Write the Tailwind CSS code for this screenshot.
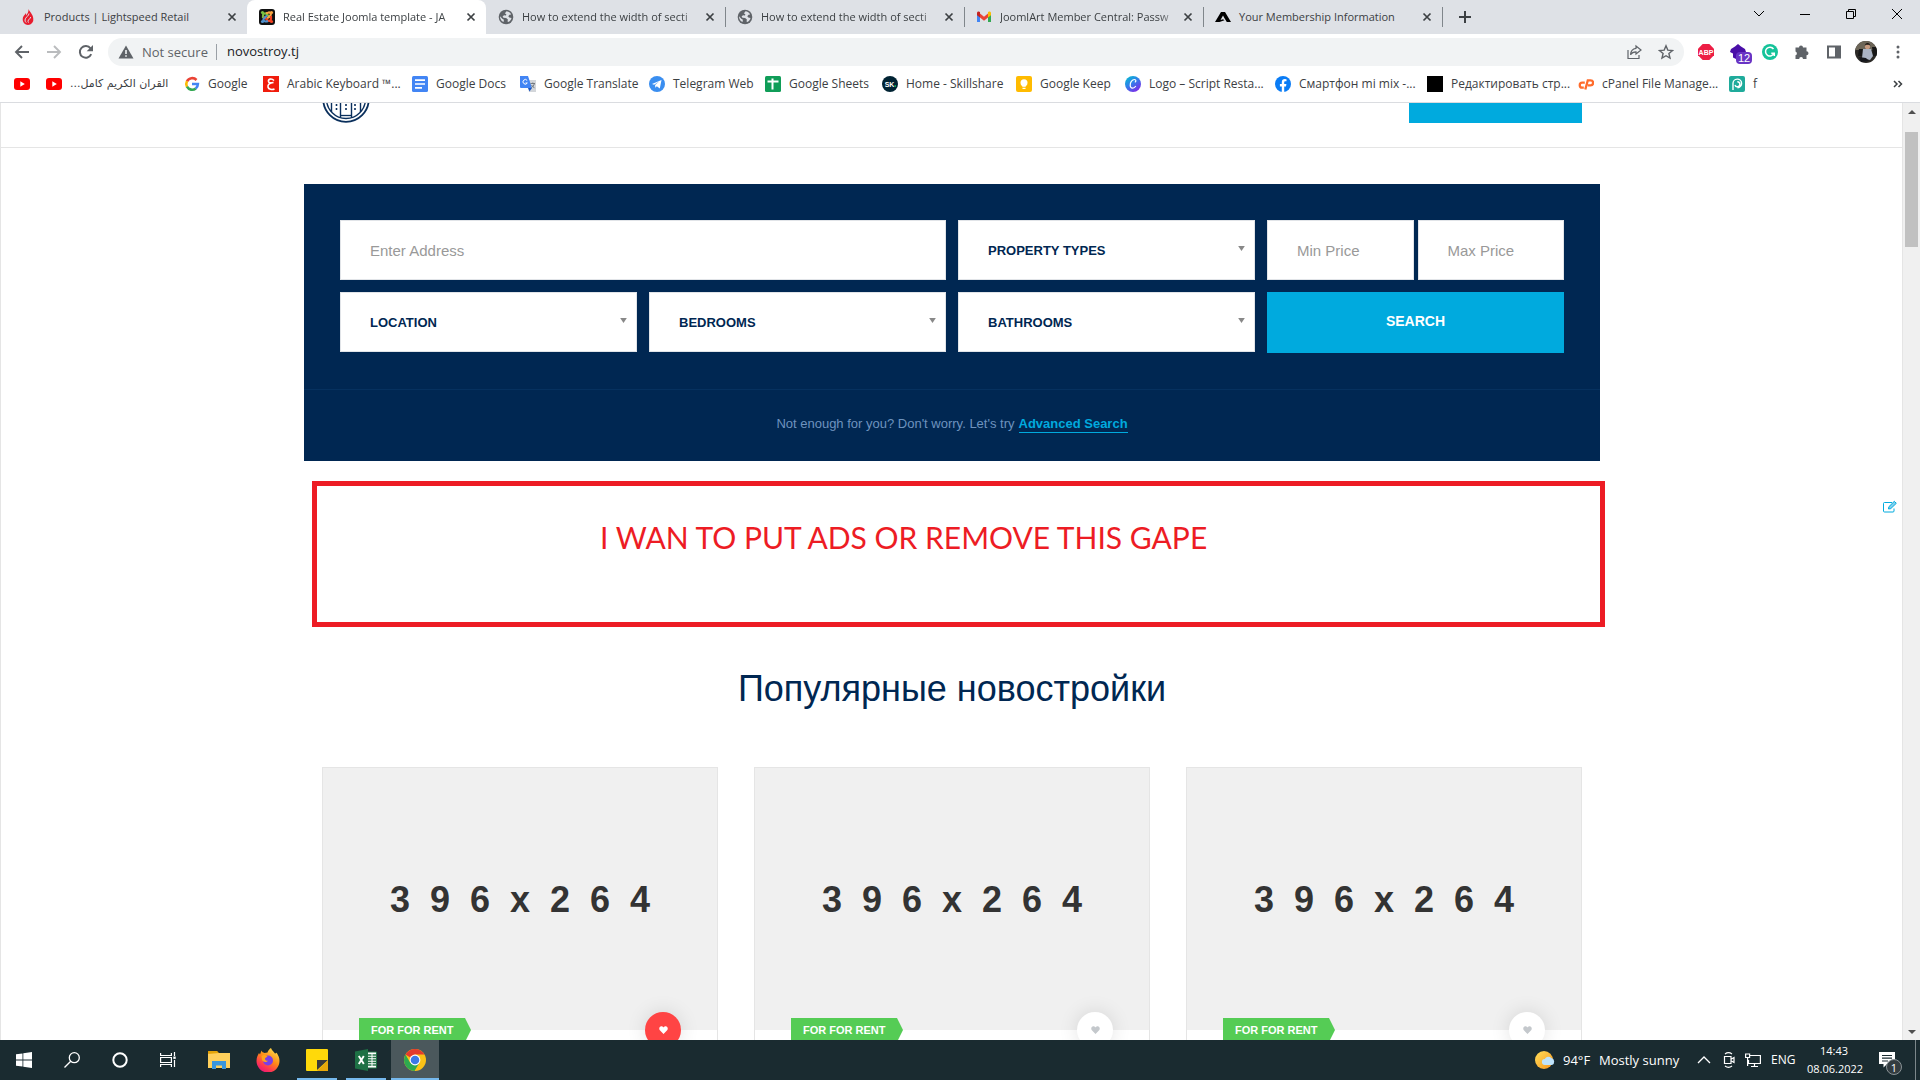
<!DOCTYPE html>
<html lang="en">
<head>
    <meta charset="UTF-8">
    <meta name="viewport" content="width=device-width, initial-scale=1.0">
    <title>Real Estate Joomla template - JA</title>
    <script src="https://cdn.jsdelivr.net/npm/@tailwindcss/browser@4"></script>
</head>
<body class="h-screen flex flex-col overflow-hidden bg-white font-['Open_Sans','Noto_Sans',sans-serif] text-xs text-[#3c4043]">

    <!-- Shared icons -->
    <svg class="hidden">
        <symbol id="i-close" viewBox="0 0 16 16"><path d="M4.5 4.5l7 7M11.5 4.5l-7 7" stroke="#3c4043" stroke-width="1.7" fill="none"/></symbol>
        <symbol id="i-globe" viewBox="0 0 16 16">
            <circle cx="8" cy="8" r="7.3" fill="#5f6368"/>
            <path d="M8.5 2.2c2 .2 3.900 1.500 4.700 3.300l-1.700.3-1.200 1.500 1 1.200 2.200.4c-.3 1.700-1.400 3.200-3 4l-1-.5.4-2-1.800-1.300-2.700-.3-.8-1.600 1.600-.9 1.800.3.300-1.500L6.800 4.500z" fill="#dee1e6"/>
            <path d="M2 7.200l2.300 2.600 1.600 1-.3 2.300C3.500 12.200 2 10 2 7.200z" fill="#dee1e6"/>
        </symbol>
        <symbol id="i-youtube" viewBox="0 0 16 16"><rect y="2" width="16" height="12" rx="3" fill="#f00"/><path d="M6.300 5.300L10.800 8l-4.500 2.700z" fill="#fff"/></symbol>
        <symbol id="i-heart" viewBox="0 0 10 9"><path d="M5 9L.9 4.800C-.5 3 .3.300 2.600.300 3.800.300 4.600 1 5 1.700 5.400 1 6.200.300 7.400.300c2.300 0 3.100 2.700 1.700 4.500z" fill="currentColor"/></symbol>
        <symbol id="i-arrow" viewBox="0 0 8 6"><path d="M0 0h8L4 6z" fill="currentColor"/></symbol>
    </svg>

    <!-- Tab strip -->
    <div class="flex h-[34px] shrink-0 bg-[#dee1e6] pl-2 text-[11px]">
        <div class="flex w-[239px] items-center gap-2 pl-3 pr-[7px]">
            <svg class="size-4 shrink-0" viewBox="0 0 16 16"><path d="M8.500 0c.8 2.500 4.800 5.700 4.800 9.700A5.400 5.400 0 0 1 8 16a5.400 5.400 0 0 1-5.300-6c0-2.600 2-4 3.300-6 .2 1 .1 1.800-.1 2.600C7.400 5 8.800 2.600 8.500 0z" fill="#e81c2e"/><path d="M9 4.500c.3 2-4 4-4 6.500 0 1.200.5 2 1.200 2.600M10.600 8c.2 1.700-2.600 2.400-2.600 4.200 0 .6.200 1 .5 1.400" stroke="#dee1e6" fill="none"/></svg>
            <span class="flex-1 whitespace-nowrap">Products | Lightspeed Retail</span>
            <button class="-ml-2" aria-label="Close tab"><svg class="size-4"><use href="#i-close"/></svg></button>
        </div>
        <div class="flex w-[239px] items-center gap-2 rounded-t-lg bg-white pl-3 pr-[7px]">
            <svg class="size-4 shrink-0" viewBox="0 0 16 16"><rect width="16" height="16" rx="3" fill="#111"/><g fill="none" stroke-width="2.200"><path d="M4 9V6.500C4 4 7 4 8 5.500l3 3" stroke="#7ac143"/><path d="M7 4.200l2-.5c2-.8 3.500 1 2.500 2.800L8 9.500" stroke="#f9a541"/><path d="M12 7v3c0 2-2.500 2.500-3.800 1L5 7.500" stroke="#f44321"/><path d="M9 12c-2 1-5 .5-4.500-2L8 6.500" stroke="#5091cd"/></g><circle cx="3.500" cy="3.500" r="1.600" fill="#7ac143"/><circle cx="12.500" cy="3.500" r="1.600" fill="#f9a541"/><circle cx="12.500" cy="12.500" r="1.600" fill="#f44321"/><circle cx="3.500" cy="12.500" r="1.600" fill="#5091cd"/></svg>
            <span class="flex-1 whitespace-nowrap [mask-image:linear-gradient(to_right,#000_88%,transparent)]">Real Estate Joomla template - JA</span>
            <button class="-ml-2" aria-label="Close tab"><svg class="size-4"><use href="#i-close"/></svg></button>
        </div>
        <div class="flex w-[239px] items-center gap-2 pl-3 pr-[7px]">
            <svg class="size-4 shrink-0"><use href="#i-globe"/></svg>
            <span class="flex-1 whitespace-nowrap [mask-image:linear-gradient(to_right,#000_88%,transparent)]">How to extend the width of secti</span>
            <button class="-ml-2" aria-label="Close tab"><svg class="size-4"><use href="#i-close"/></svg></button>
        </div>
        <div class="mt-[7px] h-5 w-px -mr-px bg-[#80868b]"></div>
        <div class="flex w-[239px] items-center gap-2 pl-3 pr-[7px]">
            <svg class="size-4 shrink-0"><use href="#i-globe"/></svg>
            <span class="flex-1 whitespace-nowrap [mask-image:linear-gradient(to_right,#000_88%,transparent)]">How to extend the width of secti</span>
            <button class="-ml-2" aria-label="Close tab"><svg class="size-4"><use href="#i-close"/></svg></button>
        </div>
        <div class="mt-[7px] h-5 w-px -mr-px bg-[#80868b]"></div>
        <div class="flex w-[239px] items-center gap-2 pl-3 pr-[7px]">
            <svg class="size-4 shrink-0" viewBox="0 0 16 16"><path d="M1 4v9h3V6z" fill="#4285f4"/><path d="M15 4v9h-3V6z" fill="#34a853"/><path d="M4 4.500L8 7.700l4-3.200v4L8 11.700 4 8.500z" fill="#ea4335"/><path d="M1 4c0-1.600 1.800-2 3-1v5.500L1 6.300z" fill="#c5221f"/><path d="M15 4c0-1.600-1.800-2-3-1v5.500l3-2.200z" fill="#fbbc04"/></svg>
            <span class="flex-1 whitespace-nowrap [mask-image:linear-gradient(to_right,#000_88%,transparent)]">JoomlArt Member Central: Passw</span>
            <button class="-ml-2" aria-label="Close tab"><svg class="size-4"><use href="#i-close"/></svg></button>
        </div>
        <div class="mt-[7px] h-5 w-px -mr-px bg-[#80868b]"></div>
        <div class="flex w-[239px] items-center gap-2 pl-3 pr-[7px]">
            <svg class="size-4 shrink-0" viewBox="0 0 16 16"><path d="M0 13L6 3h4l6 10h-4.200L9.500 9.300 8 6.500 5.500 11l2.500-.8 1.500 1L4.500 13z" fill="#000"/></svg>
            <span class="flex-1 whitespace-nowrap">Your Membership Information</span>
            <button class="-ml-2" aria-label="Close tab"><svg class="size-4"><use href="#i-close"/></svg></button>
        </div>
        <div class="mt-[7px] h-5 w-px bg-[#80868b]"></div>
        <button class="ml-3.5" aria-label="New tab"><svg class="size-4" viewBox="0 0 16 16"><path d="M8 2v12M2 8h12" stroke="#3c4043" stroke-width="2"/></svg></button>
        <div class="ml-auto flex h-7 text-black">
            <button class="flex w-[46px] items-center justify-center" aria-label="Search tabs"><svg class="size-3" viewBox="0 0 12 12"><path d="M1 3l5 5 5-5" stroke="currentColor" fill="none"/></svg></button>
            <button class="flex w-[46px] items-center justify-center" aria-label="Minimize"><svg class="size-3" viewBox="0 0 12 12"><path d="M1 6.500h10" stroke="currentColor"/></svg></button>
            <button class="flex w-[46px] items-center justify-center" aria-label="Restore"><svg class="size-3" viewBox="0 0 12 12"><path d="M1.500 3.500h7v7h-7zM3.500 3V1.500h7v7H9" stroke="currentColor" fill="none"/></svg></button>
            <button class="flex w-[46px] items-center justify-center" aria-label="Close"><svg class="size-3" viewBox="0 0 12 12"><path d="M1 1l10 10M11 1L1 11" stroke="currentColor"/></svg></button>
        </div>
    </div>

    <!-- Toolbar -->
    <div class="flex h-9 shrink-0 items-center px-1.5 text-[#5f6368]">
        <button class="flex w-8 justify-center" aria-label="Back"><svg class="size-4" viewBox="0 0 16 16"><path d="M15 8H2.500M8 2L2 8l6 6" stroke="currentColor" stroke-width="1.900" fill="none"/></svg></button>
        <button class="flex w-8 justify-center text-[#babcbe]" aria-label="Forward"><svg class="size-4" viewBox="0 0 16 16"><path d="M1 8h12.500M8 2l6 6-6 6" stroke="currentColor" stroke-width="1.900" fill="none"/></svg></button>
        <button class="flex w-8 justify-center" aria-label="Reload"><svg class="size-4" viewBox="0 0 16 16"><path d="M13.200 10.200A5.900 5.900 0 1 1 12.500 4.300" stroke="currentColor" stroke-width="2" fill="none"/><path d="M15 1v6.300H8.700z" fill="currentColor"/></svg></button>
        <div class="mx-1.5 flex h-7 flex-1 items-center rounded-full bg-[#f1f3f4] pl-2.5 pr-0.5 text-[13px]">
            <svg class="size-4" viewBox="0 0 16 16"><path d="M8 1.500L15.500 14.500H.5z" fill="#5f6368"/><path d="M7.200 6h1.600v4H7.200zM7.200 11.200h1.600v1.600H7.200z" fill="#f1f3f4"/></svg>
            <span class="ml-2 w-[75px] border-r border-[#9aa0a6] leading-4">Not secure</span>
            <input class="ml-2.5 min-w-0 flex-1 bg-transparent text-[#202124] outline-none" type="text" value="novostroy.tj" aria-label="Address">
            <button class="flex w-8 justify-center" aria-label="Share"><svg class="size-4" viewBox="0 0 16 16"><path d="M2 6v8.500h11V11M10 2l5 4-5 4V7.800c-2.500 0-4.200.7-5.500 3 .2-3.500 2-6 5.500-6.500z" stroke="currentColor" stroke-width="1.200" fill="none"/></svg></button>
            <button class="flex w-8 justify-center" aria-label="Bookmark"><svg class="size-4" viewBox="0 0 16 16"><path d="M8 1.800l1.800 4.300 4.700.4-3.600 3 1.100 4.600L8 11.700l-4 2.400 1.100-4.600-3.600-3 4.700-.4z" stroke="currentColor" stroke-width="1.400" fill="none"/></svg></button>
        </div>
        <button class="flex w-8 justify-center" aria-label="Adblock Plus">
            <svg class="size-4" viewBox="0 0 16 16"><path d="M4.700 0h6.600L16 4.700v6.600L11.300 16H4.700L0 11.300V4.700z" fill="#ed1e45"/><text x="8" y="10.500" text-anchor="middle" font-family="Liberation Sans" font-weight="700" font-size="7" fill="#fff">ABP</text></svg>
        </button>
        <button class="relative flex w-8 justify-center" aria-label="Extension">
            <svg class="size-4" viewBox="0 0 16 16"><path d="M8 0l3 2.500L15 5l1 3-3 1.500v4L8 16l-5-2.500v-4L0 8l1-3 4-2.500z" fill="#4a0fa8"/></svg>
            <span class="absolute left-3.5 top-2 rounded-sm bg-[#6833c4] px-0.5 font-['Liberation_Sans'] text-[11px] leading-3 text-white">12</span>
        </button>
        <button class="flex w-8 justify-center" aria-label="Grammarly"><svg class="size-4" viewBox="0 0 16 16"><circle cx="8" cy="8" r="8" fill="#15c39a"/><path d="M11.500 5A4.400 4.400 0 1 0 12 9.300H9.300M12.300 12V9" stroke="#fff" stroke-width="1.500" fill="none"/></svg></button>
        <button class="flex w-8 justify-center" aria-label="Extensions"><svg class="size-4" viewBox="0 0 16 16"><path d="M5 3.500a2 2 0 0 1 4 0h3.500v3.700a2 2 0 0 1 0 4V15H9a1.900 1.900 0 0 0-3.800 0H1.500v-3.700a2 2 0 0 0 0-3.800v-4z" fill="currentColor"/></svg></button>
        <button class="flex w-8 justify-center" aria-label="Side panel"><svg class="size-4" viewBox="0 0 16 16"><path d="M1 1.500h14v13H1zM3 3.500v9h6v-9z" fill="currentColor" fill-rule="evenodd"/></svg></button>
        <button class="flex w-8 justify-center" aria-label="Profile">
            <svg class="size-[22px]" viewBox="0 0 22 22"><clipPath id="avatar"><circle cx="11" cy="11" r="11"/></clipPath><g clip-path="url(#avatar)"><path d="M0 0h22v22H0z" fill="#2b2926"/><path d="M0 0h22v9H0z" fill="#6d6658"/><path d="M4 8h4v7H3zM17 6h5v9h-4z" fill="#171717"/><path d="M8 8h8l2 7-3 4-8-2z" fill="#aab3c4"/><circle cx="12.500" cy="5.500" r="2.600" fill="#c79b80"/><path d="M9.800 5c0-4 5.500-4 5.500 0l-1-1.200h-3.500z" fill="#1a1412"/><path d="M4 16l7 1 3 3-8 1z" fill="#15171c"/></g></svg>
        </button>
        <button class="flex w-8 justify-center" aria-label="Menu"><svg class="size-4" viewBox="0 0 16 16" fill="currentColor"><circle cx="8" cy="3" r="1.500"/><circle cx="8" cy="8" r="1.500"/><circle cx="8" cy="13" r="1.500"/></svg></button>
    </div>

    <!-- Bookmarks bar -->
    <nav class="flex h-[33px] shrink-0 items-center justify-between border-b border-[#dadce0] px-3.5 pb-1 whitespace-nowrap">
        <div class="grid grid-cols-[16px_122px_63px_133px_92px_113px_100px_101px_118px_93px_134px_136px_135px_135px_30px] gap-x-4">
            <a href="#" class="flex items-center" aria-label="YouTube"><svg class="size-4"><use href="#i-youtube"/></svg></a>
            <a href="#" class="flex items-center gap-2"><svg class="size-4 shrink-0"><use href="#i-youtube"/></svg><span dir="rtl" class="font-['DejaVu_Sans'] text-[11px] leading-4">القران الكريم كامل...</span></a>
            <a href="#" class="flex items-center gap-2"><svg class="size-4 shrink-0" viewBox="0 0 16 16" fill="none" stroke-width="2.600"><path d="M12.500 4A5.900 5.900 0 0 0 3 5.300" stroke="#ea4335"/><path d="M3 5.200a5.900 5.900 0 0 0 0 5.600" stroke="#fbbc05"/><path d="M3 10.700a5.900 5.900 0 0 0 8.800 1.800" stroke="#34a853"/><path d="M11.700 12.500A5.900 5.900 0 0 0 13.900 8H8" stroke="#4285f4"/></svg>Google</a>
            <a href="#" class="flex items-center gap-2"><svg class="size-4 shrink-0" viewBox="0 0 16 16"><path d="M0 0h16v16H0z" fill="#f01c0c"/><path d="M11 4.500C8.500 2 5 3 5.500 5.500c.3 1.300 2 1.700 5 1-3.500.5-6 1.800-5.500 4.500.5 2.500 4 3 6.500 2" stroke="#fff" stroke-width="1.600" fill="none"/></svg>Arabic Keyboard ™...</a>
            <a href="#" class="flex items-center gap-2"><svg class="size-4 shrink-0" viewBox="0 0 16 16"><rect width="16" height="16" rx="1.500" fill="#4285f4"/><path d="M3 4.200h10M3 8h10M3 11.800h7" stroke="#fff" stroke-width="1.700"/></svg>Google Docs</a>
            <a href="#" class="flex items-center gap-2"><svg class="size-4 shrink-0" viewBox="0 0 16 16"><path d="M6 4h10v12H9z" fill="#d3d6da"/><path d="M0 0h8l4 12H1a1 1 0 0 1-1-1z" fill="#4285f4"/><path d="M8 12h4l-2.500 3.500z" fill="#1a56c4"/><path d="M7.200 4.500A2.300 2.300 0 1 0 7.300 7H5.500" stroke="#fff" fill="none"/><path d="M10.500 7.500H15M12.800 6.500v1M14.300 7.700c-.5 2-1.500 3.200-3 4M11.500 9l3 3.200" stroke="#6b7278" stroke-width=".9" fill="none"/></svg>Google Translate</a>
            <a href="#" class="flex items-center gap-2"><svg class="size-4 shrink-0" viewBox="0 0 16 16"><circle cx="8" cy="8" r="8" fill="#3a8ef0"/><path d="M3 8l9.500-4-1.700 8.500-3-2.200-1.500 1.500-.2-2.700 4-3.500-5 3.200z" fill="#fff"/></svg>Telegram Web</a>
            <a href="#" class="flex items-center gap-2"><svg class="size-4 shrink-0" viewBox="0 0 16 16"><rect width="16" height="16" rx="1.500" fill="#109d58"/><path d="M2.500 5.500h11M7.500 2.500v11" stroke="#fff" stroke-width="2"/></svg>Google Sheets</a>
            <a href="#" class="flex items-center gap-2"><svg class="size-4 shrink-0" viewBox="0 0 16 16"><circle cx="8" cy="8" r="8" fill="#002333"/><text x="7.500" y="10.500" text-anchor="middle" font-family="Liberation Sans" font-weight="700" font-size="7" fill="#fff">SK</text><circle cx="13.200" cy="10" r=".8" fill="#00ff84"/></svg>Home - Skillshare</a>
            <a href="#" class="flex items-center gap-2"><svg class="size-4 shrink-0" viewBox="0 0 16 16"><rect width="16" height="16" rx="2" fill="#ffbb00"/><circle cx="8" cy="6.700" r="3.500" fill="#fff"/><path d="M6.200 9h3.600v1.800H6.200zM6.500 11.800h3v1.300h-3z" fill="#fff"/></svg>Google Keep</a>
            <a href="#" class="flex items-center gap-2"><svg class="size-4 shrink-0" viewBox="0 0 16 16"><linearGradient id="canva" x1="0" y1="0" x2=".7" y2="1"><stop stop-color="#00c4cc"/><stop offset=".5" stop-color="#2f80ea"/><stop offset="1" stop-color="#7d2ae8"/></linearGradient><circle cx="8" cy="8" r="8" fill="url(#canva)"/><path d="M9.800 6.200c1.500-.5 1.500-2.700-.3-2.700-2.500 0-4.500 3-4.300 6 .2 3.500 3.800 3.500 5.600.5" stroke="#fff" stroke-width="1.200" fill="none"/></svg>Logo – Script Resta...</a>
            <a href="#" class="flex items-center gap-2"><svg class="size-4 shrink-0" viewBox="0 0 16 16"><circle cx="8" cy="8" r="8" fill="#0a7cf5"/><path d="M6.800 16v-5.500H4.900V8h1.900V6.300c0-2.100 1.200-3.200 3-3.200l1.700.1v2h-1c-1 0-1.300.6-1.300 1.200V8h2.200l-.4 2.500H9.200V16z" fill="#fff"/></svg>Смартфон mi mix -...</a>
            <a href="#" class="flex items-center gap-2"><svg class="size-4 shrink-0" viewBox="0 0 16 16"><path d="M0 0h16v16H0z"/></svg>Редактировать стр...</a>
            <a href="#" class="flex items-center gap-2"><svg class="size-4 shrink-0" viewBox="0 0 16 16" fill="none" stroke="#ff6c2c" stroke-width="2.300"><path d="M6.800 6.700H4.200a2.400 2.400 0 0 0 0 4.900h1.600M7.300 13.500L9.800 4.300h2.800a2.500 2.500 0 0 1 0 5h-2.800"/></svg>cPanel File Manage...</a>
            <a href="#" class="flex items-center gap-2"><svg class="size-4 shrink-0" viewBox="0 0 16 16"><rect width="16" height="16" rx="2" fill="#1fab9b"/><path d="M4 14V7.500a4.300 4.300 0 1 1 4.500 4.200M6 9a2.500 2.500 0 1 0 2.300-3.200" stroke="#fff" stroke-width="1.400" fill="none"/></svg>f</a>
        </div>
        <button class="pr-0.5" aria-label="More bookmarks"><svg class="size-3" viewBox="0 0 12 12"><path d="M2 3l3 3-3 3M6.500 3l3 3-3 3" stroke="#3c4043" stroke-width="1.500" fill="none"/></svg></button>
    </nav>

    <!-- Page -->
    <div class="flex min-h-0 flex-1 font-['Liberation_Sans',Arial,sans-serif]">
        <main class="relative min-w-0 flex-1 overflow-hidden border-l border-[#e5e5e5]">
            <header class="border-b border-[#e5e5e5]">
                <div class="mx-auto flex h-11 max-w-[1260px] items-start justify-between">
                    <a href="#" aria-label="Home">
                        <svg class="h-5 w-12" viewBox="0 28 48 20" fill="none" stroke="#0a2f5c"><circle cx="24" cy="24" r="22.800" stroke-width="1.800"/><circle cx="24" cy="24" r="19.500" stroke-width="1.300"/><path d="M18.500 28v14M29.500 28v14M38.500 28v9M9.500 28v9" stroke-width="1.400"/><path d="M18 40.500h12" stroke-width="1.300"/><path d="M24 29v8M33 29v8M14.500 29v8" stroke-dasharray="2 2" stroke-width="1.600"/></svg>
                    </a>
                    <button class="h-5 w-[173px] bg-[#00aade]" aria-label="Submit property"></button>
                </div>
            </header>

            <div class="mx-auto mt-9 max-w-[1296px]">
                <form class="bg-[#002752]">
                    <div class="grid grid-cols-4 gap-3 px-9 pt-9 pb-9 text-[13px] font-bold text-[#002752]">
                        <input class="col-span-2 h-[60px] border border-[#e1e4e8] bg-white px-[29px] text-[15px] font-normal placeholder:text-[#999]" type="text" placeholder="Enter Address" aria-label="Address">
                        <div class="relative">
                            <select class="h-[60px] w-full appearance-none border border-[#e1e4e8] bg-white px-[29px] pt-0.5 uppercase" aria-label="Property types"><option>Property Types</option></select>
                            <svg class="pointer-events-none absolute right-2.5 top-[26px] h-[5px] w-[7px] text-[#888]"><use href="#i-arrow"/></svg>
                        </div>
                        <div class="grid grid-cols-2 gap-1">
                            <input class="h-[60px] min-w-0 border border-[#e1e4e8] bg-white px-[29px] text-[15px] font-normal placeholder:text-[#999]" type="text" placeholder="Min Price" aria-label="Min price">
                            <input class="h-[60px] min-w-0 border border-[#e1e4e8] bg-white px-[29px] text-[15px] font-normal placeholder:text-[#999]" type="text" placeholder="Max Price" aria-label="Max price">
                        </div>
                        <div class="relative">
                            <select class="h-[60px] w-full appearance-none border border-[#e1e4e8] bg-white px-[29px] pt-0.5 uppercase" aria-label="Location"><option>Location</option></select>
                            <svg class="pointer-events-none absolute right-2.5 top-[26px] h-[5px] w-[7px] text-[#888]"><use href="#i-arrow"/></svg>
                        </div>
                        <div class="relative">
                            <select class="h-[60px] w-full appearance-none border border-[#e1e4e8] bg-white px-[29px] pt-0.5 uppercase" aria-label="Bedrooms"><option>Bedrooms</option></select>
                            <svg class="pointer-events-none absolute right-2.5 top-[26px] h-[5px] w-[7px] text-[#888]"><use href="#i-arrow"/></svg>
                        </div>
                        <div class="relative">
                            <select class="h-[60px] w-full appearance-none border border-[#e1e4e8] bg-white px-[29px] pt-0.5 uppercase" aria-label="Bathrooms"><option>Bathrooms</option></select>
                            <svg class="pointer-events-none absolute right-2.5 top-[26px] h-[5px] w-[7px] text-[#888]"><use href="#i-arrow"/></svg>
                        </div>
                        <button class="h-[61px] bg-[#00aade] pb-1 text-sm text-white" type="button">SEARCH</button>
                    </div>
                    <p class="flex h-[72px] items-baseline justify-center gap-1 border-t border-[#06315f] pt-[26px] text-[13px] leading-4 text-[#6e93bf]">
                        Not enough for you? Don't worry. Let's try <a href="#" class="border-b border-[#00aade] font-bold text-[#00aade]">Advanced Search</a>
                    </p>
                </form>

                <div class="mt-5 ml-2 -mr-[5px] h-[146px] border-5 border-[#ed1c24]">
                    <p class="pt-[33px] pl-[283px] font-['Lato'] text-3xl text-[#ed1c24]">I WAN TO PUT ADS OR REMOVE THIS GAPE</p>
                </div>
            </div>

            <section class="mx-auto max-w-[1260px]">
                <h2 class="mt-[42px] text-center text-4xl text-[#002752]">Популярные новостройки</h2>
                <div class="mt-[58px] grid grid-cols-3 gap-9">
                    <article class="border border-[#e5e5e5]">
                        <div class="relative flex h-[262px] items-center justify-center bg-[#f0f0f0] pt-0.5">
                            <span class="whitespace-pre text-4xl font-bold text-[#333]">3  9  6  x  2  6  4</span>
                            <span class="absolute -bottom-3 left-9 flex h-6 w-28 items-center bg-[#55cc55] pl-3 text-[11px] font-bold text-white [clip-path:polygon(0_0,106px_0,100%_50%,106px_100%,0_100%)]">FOR FOR RENT</span>
                            <button class="absolute -bottom-[18px] right-9 flex size-9 items-center justify-center rounded-full bg-[#ff4444] text-white shadow-[0_0_20px_rgba(0,0,0,0.12)]" aria-label="Favorite"><svg class="h-2 w-[9px]"><use href="#i-heart"/></svg></button>
                        </div>
                        <div class="h-40"></div>
                    </article>
                    <article class="border border-[#e5e5e5]">
                        <div class="relative flex h-[262px] items-center justify-center bg-[#f0f0f0] pt-0.5">
                            <span class="whitespace-pre text-4xl font-bold text-[#333]">3  9  6  x  2  6  4</span>
                            <span class="absolute -bottom-3 left-9 flex h-6 w-28 items-center bg-[#55cc55] pl-3 text-[11px] font-bold text-white [clip-path:polygon(0_0,106px_0,100%_50%,106px_100%,0_100%)]">FOR FOR RENT</span>
                            <button class="absolute -bottom-[18px] right-9 flex size-9 items-center justify-center rounded-full bg-white text-[#c4c8cc] shadow-[0_0_20px_rgba(0,0,0,0.12)]" aria-label="Favorite"><svg class="h-2 w-[9px]"><use href="#i-heart"/></svg></button>
                        </div>
                        <div class="h-40"></div>
                    </article>
                    <article class="border border-[#e5e5e5]">
                        <div class="relative flex h-[262px] items-center justify-center bg-[#f0f0f0] pt-0.5">
                            <span class="whitespace-pre text-4xl font-bold text-[#333]">3  9  6  x  2  6  4</span>
                            <span class="absolute -bottom-3 left-9 flex h-6 w-28 items-center bg-[#55cc55] pl-3 text-[11px] font-bold text-white [clip-path:polygon(0_0,106px_0,100%_50%,106px_100%,0_100%)]">FOR FOR RENT</span>
                            <button class="absolute -bottom-[18px] right-9 flex size-9 items-center justify-center rounded-full bg-white text-[#c4c8cc] shadow-[0_0_20px_rgba(0,0,0,0.12)]" aria-label="Favorite"><svg class="h-2 w-[9px]"><use href="#i-heart"/></svg></button>
                        </div>
                        <div class="h-40"></div>
                    </article>
                </div>
            </section>

            <a href="#" class="absolute right-1.5 top-[397px]" aria-label="Edit"><svg class="h-3.5 w-3.5" viewBox="0 0 14 14" fill="none" stroke="#00aade"><path d="M11 8.500v2.500a1 1 0 0 1-1 1H1.500a1 1 0 0 1-1-1v-7.500a1 1 0 0 1 1-1H9"/><path d="M5.500 9l.4-2.300L11.300 1.300l2 2L7.800 8.600z" fill="#7fd0ee"/></svg></a>
        </main>

        <!-- Scrollbar -->
        <aside class="z-10 flex w-[17px] shrink-0 flex-col items-center bg-[#f0f0f0] pt-[7px] pb-[6px] text-[#505050] shadow-[-1px_0_0_#e5e5e5]">
            <svg class="h-1 w-2 rotate-180" viewBox="0 0 8 4"><path d="M0 0h8L4 4z" fill="currentColor"/></svg>
            <div class="mt-[18px] h-[115px] w-[13px] bg-[#c1c1c1]"></div>
            <svg class="mt-auto h-1 w-2" viewBox="0 0 8 4"><path d="M0 0h8L4 4z" fill="currentColor"/></svg>
        </aside>
    </div>

    <!-- Taskbar -->
    <footer class="flex h-10 shrink-0 bg-[#1a2b30] text-white">
        <button class="flex w-12 items-center justify-center" aria-label="Start"><svg class="size-4" viewBox="0 0 16 16" fill="#fff"><path d="M0 2.300l6.500-.9v6.200H0zM7.300 1.300L16 0v7.600H7.300zM0 8.400h6.500v6.200L0 13.700zM7.300 8.400H16V16l-8.700-1.300z"/></svg></button>
        <button class="flex w-12 items-center justify-center" aria-label="Search"><svg class="size-4" viewBox="0 0 16 16" fill="none" stroke="#fff" stroke-width="1.300"><circle cx="10.300" cy="5.700" r="5"/><path d="M6.700 9.300L.5 15.500"/></svg></button>
        <button class="flex w-12 items-center justify-center" aria-label="Cortana"><svg class="size-4" viewBox="0 0 16 16" fill="none" stroke="#fff" stroke-width="2"><circle cx="8" cy="8" r="6.700"/></svg></button>
        <button class="flex w-12 items-center justify-center" aria-label="Task view"><svg class="size-4" viewBox="0 0 16 16" fill="none" stroke="#fff" stroke-width="1.200"><path d="M.6 1v2.500h10.800V1M.6 15v-2.500h10.800V15M.6 5.500h10.800v5H.6zM14.500 0v4M14.500 8v7"/><path d="M13.300 4.500h2.400v2.400h-2.400z" fill="#fff" stroke="none"/></svg></button>
        <div class="ml-[3px] flex gap-px">
            <button class="flex w-12 items-center justify-center" aria-label="File Explorer"><svg class="size-[22px]" viewBox="0 0 22 22"><path d="M0 2h9l1 2H0z" fill="#e09b00"/><path d="M0 4h22v15H0z" fill="#ffd05c"/><path d="M0 5l1-3h8l2 2z" fill="#e5a50a"/><path d="M4 12h14v8h-4v-3.500H8V20H4z" fill="#3a96dd"/></svg></button>
            <button class="flex w-12 items-center justify-center" aria-label="Firefox"><svg class="size-6" viewBox="0 0 24 24"><linearGradient id="ff" x1=".8" y1="0" x2=".2" y2="1"><stop stop-color="#ffe14d"/><stop offset=".45" stop-color="#ff8a16"/><stop offset=".75" stop-color="#ff3750"/><stop offset="1" stop-color="#e5127d"/></linearGradient><path d="M15 0c.5 2 2 3 4 5.500 1.500-.2 1.500-1 1.500-1 2 3 3 5.500 3 8.500a11.500 11.500 0 0 1-23 0c0-4 1.500-6 2.500-8l1 1.500L5.500 2.500C6 4 7 4.500 8.500 5l3-.5C12 2.500 13.500 1 15 0z" fill="url(#ff)"/><circle cx="12" cy="12.500" r="5" fill="#7b3fe4"/><path d="M5.500 8c2-1.500 4-1.500 6 .5l-2.500 1.700c0 2 1.200 2.700 3 2.500-1.500 2-5 1.500-6-1z" fill="#ffa41a"/></svg></button>
            <button class="relative flex w-12 items-center justify-center" aria-label="Sticky Notes"><svg class="size-[22px]" viewBox="0 0 22 22"><rect width="22" height="22" rx="1" fill="#ffd90a"/><path d="M11 11h11L11 21z" fill="#3b3b3b"/><path d="M22 11v11H11z" fill="#e8a80c"/></svg><span class="absolute inset-x-1 bottom-0 h-0.5 bg-[#76b9ed]"></span></button>
            <button class="relative flex w-12 items-center justify-center" aria-label="Excel"><svg class="size-[22px]" viewBox="0 0 22 22"><path d="M12 3h9.500v16H12z" fill="#fff" stroke="#207245"/><path d="M13 6h3.500M13 8.500h3.500M13 11h3.500M13 13.500h3.500M13 16h3.500M17.500 6H21M17.500 8.500H21M17.500 11H21M17.500 13.500H21M17.500 16H21" stroke="#207245" stroke-width="1.300"/><path d="M0 2.500L13 0v22L0 19.500z" fill="#1e7145"/><path d="M3.800 7l5 8M8.800 7l-5 8" stroke="#fff" stroke-width="1.900"/></svg><span class="absolute inset-x-1 bottom-0 h-0.5 bg-[#76b9ed]"></span></button>
            <button class="relative flex w-12 items-center justify-center bg-[#4b585c]" aria-label="Chrome"><svg class="size-[22px]" viewBox="0 0 22 22"><circle cx="11" cy="11" r="11" fill="#fbc116"/><path d="M1.500 5.500A11 11 0 0 0 10.500 22l5-8.500-4.500-2.500-4.800 2.700z" fill="#2da94f"/><path d="M1.500 5.500A11 11 0 0 1 20.500 5.500H11L6.300 8.500z" fill="#e33b2e"/><circle cx="11" cy="11" r="5.400" fill="#fff"/><circle cx="11" cy="11" r="4.300" fill="#3b78e7"/></svg><span class="absolute inset-x-0 bottom-0 h-0.5 bg-[#76b9ed]"></span></button>
        </div>
        <div class="ml-auto flex items-center">
            <svg class="size-5" viewBox="0 0 20 20"><linearGradient id="sun" x1="0" y1="0" x2="1" y2="1"><stop stop-color="#ffdf5a"/><stop offset="1" stop-color="#f7941d"/></linearGradient><circle cx="9" cy="10" r="9" fill="url(#sun)"/><path d="M10 15a3 3 0 0 1-.2-6 4 4 0 0 1 6.500-1A3.700 3.700 0 0 1 17 15z" fill="#bfe3fb"/></svg>
            <span class="ml-2 w-9 pt-0.5 text-[13px]">94°F</span>
            <span class="w-[98px] pt-0.5 text-[13px]">Mostly sunny</span>
            <svg class="h-3 w-3.5" viewBox="0 0 14 12" fill="none" stroke="#fff" stroke-width="1.300"><path d="M1 9l6-6 6 6"/></svg>
            <svg class="ml-2.5 size-4" viewBox="0 0 16 16" fill="none" stroke="#fff" stroke-width="1.200"><path d="M3.500 4.500h6.500v7H3.500zM10.500 7l2.500-1.500v5L10.500 9M4 2c2-1.500 5-1.500 7 0M4 14c2 1.500 5 1.500 7 0"/></svg>
            <svg class="ml-2 size-4" viewBox="0 0 16 16" fill="none" stroke="#fff" stroke-width="1.200"><path d="M5 3.500h10.400v8H3.500V8M9.500 11.500v3M6 14.500h7M.6 2h4v3.500h-4zM2.600 5.500V14"/></svg>
            <span class="ml-2.5 w-9">ENG</span>
            <div class="w-[54px] text-center text-[11px] leading-[18px] whitespace-nowrap"><p>14:43</p><p>08.06.2022</p></div>
            <div class="relative ml-[18px] mr-5">
                <svg class="size-4" viewBox="0 0 16 16"><path d="M0 0h16v12H8l-3.500 3.500V12H0z" fill="#fff"/><path d="M3 3.500h10M3 6.200h10M3 9h6" stroke="#1a2b30" stroke-width="1.200"/></svg>
                <span class="absolute left-[7px] top-[7px] flex size-4 items-center justify-center rounded-full border border-[#8a9396] bg-[#333c40] text-[11px] leading-none">1</span>
            </div>
            <div class="mr-1 h-10 w-px bg-[#7c878a]"></div>
        </div>
    </footer>
</body>
</html>
